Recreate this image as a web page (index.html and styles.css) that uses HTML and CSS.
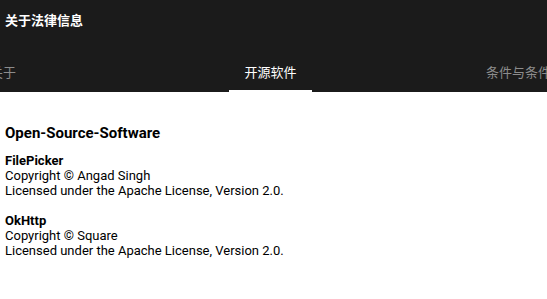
FILE: index.html
```html
<!DOCTYPE html>
<html lang="zh">
<head>
    <meta charset="UTF-8">
    <meta name="viewport" content="width=device-width, initial-scale=1.0">
    <title>关于法律信息</title>
    <link rel="stylesheet" href="styles.css">
</head>
<body>
    <div class="appbar">
        <div class="toolbar">
            <h1>关于法律信息</h1>
        </div>
        <div class="tabs">
            <div class="tab tab-first"><span class="label">关于</span></div>
            <div class="tab tab-active"><span class="label">开源软件</span></div>
            <div class="tab tab-last"><span class="label">条件与条件</span></div>
        </div>
    </div>

    <div class="content">
        <h2>Open-Source-Software</h2>
        <div class="lib">
            <h3>FilePicker</h3>
            <p>Copyright © Angad Singh</p>
            <p>Licensed under the Apache License, Version 2.0.</p>
        </div>
        <div class="lib">
            <h3>OkHttp</h3>
            <p>Copyright © Square</p>
            <p>Licensed under the Apache License, Version 2.0.</p>
        </div>
    </div>
</body>
</html>
```

FILE: styles.css
```css
body {
    margin: 0;
    font-family: Roboto, "Noto Sans CJK SC", sans-serif;
    background-color: white;
    color: #000;
}

.appbar {
    background-color: #1b1b1b;
    overflow: hidden;
}

.toolbar {
    height: 40px;
    padding: 0 5px;
}

.toolbar h1 {
    margin: 0;
    font-size: 13px;
    line-height: 41px;
    font-weight: bold;
    color: white;
}

.tabs {
    display: flex;
    height: 52px;
    margin-left: -117px;
}

.tab {
    flex: none;
    display: flex;
    justify-content: center;
    font-size: 13px;
    color: #8c8c8c;
}

.tab .label {
    display: block;
    height: 100%;
    box-sizing: border-box;
    padding: 24px 15px 0;
    line-height: 18px;
    white-space: nowrap;
}

.tab-first {
    width: 240px;
}

.tab-active {
    width: 295px;
    color: white;
}

.tab-active .label {
    border-bottom: 2px solid white;
}

.tab-last {
    width: 201px;
}

.content {
    padding: 31px 5px 0;
}

.content h2 {
    margin: 0 0 10px;
    font-size: 15px;
    line-height: 20px;
    font-weight: bold;
}

.lib {
    margin-bottom: 15px;
    font-size: 13px;
    line-height: 15px;
}

.lib h3 {
    margin: 0;
    font-size: 13px;
    font-weight: bold;
}

.lib p {
    margin: 0;
}
```
